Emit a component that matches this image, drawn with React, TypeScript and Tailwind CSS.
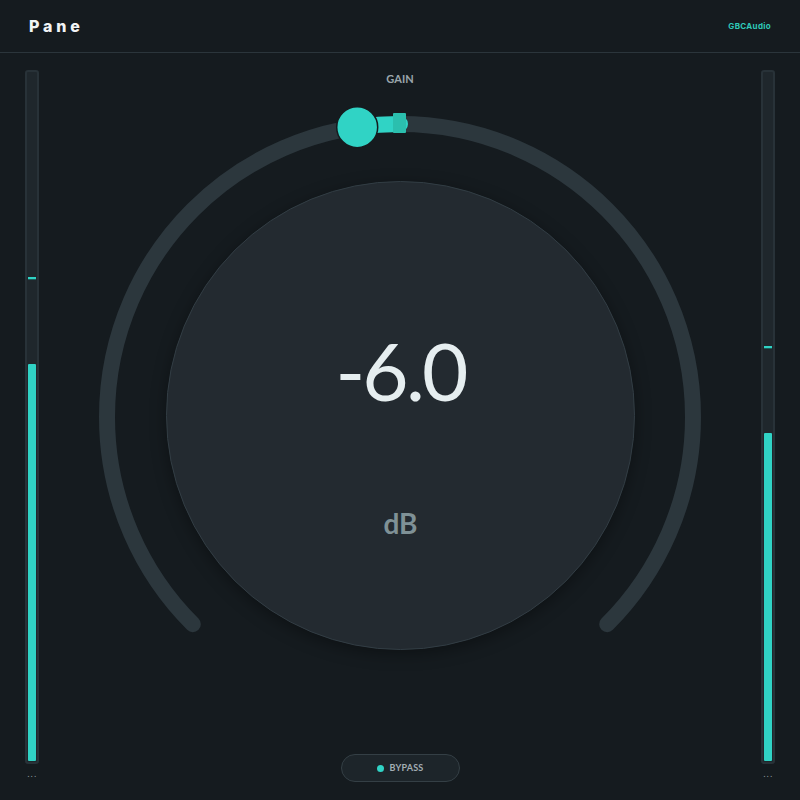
import React from "react";

const TEAL = "#30d3c5";

function Meter({ fill, peak }: { fill: number; peak: number }) {
  return (
    <div className="flex flex-col items-center w-[14px]">
      <div className="relative w-[14px] h-[694px] rounded-[3px] border-2 border-[#283238] bg-[#1f272c] p-px flex flex-col justify-end">
        <div className="w-full bg-[#30d3c5] rounded-[1px]" style={{ height: fill }} />
        <div
          className="absolute left-px right-px h-[3px] border-b border-[#1a5e5a] bg-[#30d3c5]"
          style={{ top: peak }}
        />
      </div>
      <div className="mt-[5px] text-[9px] leading-[10px] tracking-[0.05em] text-[#8a969b]" style={{ fontFamily: "'DejaVu Sans', sans-serif" }}>
        ...
      </div>
    </div>
  );
}

function Knob() {
  const cx = 305;
  const cy = 305;
  const r = 293;
  const a = (deg: number) => {
    const t = (deg * Math.PI) / 180;
    return [cx + r * Math.sin(t), cy - r * Math.cos(t)];
  };
  const [sx, sy] = a(-135);
  const [ex, ey] = a(135);
  const [hx, hy] = a(-8.4);
  return (
    <div className="relative w-[610px] h-[610px]">
      <svg width="610" height="610" viewBox="0 0 610 610" className="absolute inset-0 overflow-visible">
        <path
          d={`M ${sx} ${sy} A ${r} ${r} 0 1 1 ${ex} ${ey}`}
          fill="none"
          stroke="#2c373d"
          strokeWidth="16"
          strokeLinecap="round"
        />
        <path
          d={`M ${hx} ${hy} A ${r} ${r} 0 0 1 ${cx} ${cy - r}`}
          fill="none"
          stroke={TEAL}
          strokeWidth="16"
          strokeLinecap="round"
        />
        <rect x="298" y="1" width="13" height="20" rx="1" fill="#2bbfae" />
        <circle cx={hx} cy={hy} r="20.5" fill={TEAL} stroke="#151b1f" strokeWidth="1.5" />
      </svg>
      <div className="absolute left-[71px] top-[69px] w-[469px] h-[469px] rounded-full bg-[#232a30] border border-[#323d44] shadow-[0_4px_16px_rgba(0,0,0,0.35)] flex flex-col items-center pt-[148px]">
        <div
          className="h-[80px] text-[80px] leading-[80px] font-normal tracking-[-0.035em] text-[#e6eef0]"
          style={{ fontFamily: "Lato, sans-serif" }}
        >
          -6.0
        </div>
        <div
          className="mt-[99px] text-[28px] leading-[28px] font-bold text-[#7f9196]"
          style={{ fontFamily: "Lato, sans-serif" }}
        >
          dB
        </div>
      </div>
    </div>
  );
}

export default function App() {
  return (
    <div className="w-[800px] h-[800px] bg-[#151b1f] overflow-hidden flex flex-col" style={{ fontFamily: "Lato, sans-serif" }}>
      <div className="h-[53px] shrink-0 border-b border-[#2b353b] flex items-center justify-between pl-[29px] pr-[29px]">
        <div className="text-[16px] font-extrabold tracking-[0.24em] text-[#f1f4f5]" style={{ fontFamily: "Inter, sans-serif" }}>
          Pane
        </div>
        <div className="text-[8px] font-bold tracking-[0.04em] text-[#2fc9b8]" style={{ fontFamily: "Inter, sans-serif" }}>
          GBCAudio
        </div>
      </div>
      <div className="flex flex-1 px-[25px]">
        <div className="pt-[17px]">
          <Meter fill={397} peak={205} />
        </div>
        <div className="flex-1 flex flex-col items-center pt-[20px]">
          <div className="text-[11px] leading-[12px] font-bold text-[#9ba6ab]">GAIN</div>
          <div className="mt-[27px]">
            <Knob />
          </div>
          <div className="mt-[32px] w-[119px] h-[28px] rounded-full bg-[#1d252a] border border-[#343f45] flex items-center justify-center gap-[6px]">
            <div className="w-[7px] h-[7px] rounded-full bg-[#30d3c5]" />
            <div className="text-[9px] font-bold tracking-[0.02em] text-[#a3aeb3]">BYPASS</div>
          </div>
        </div>
        <div className="pt-[17px]">
          <Meter fill={328} peak={274} />
        </div>
      </div>
    </div>
  );
}
